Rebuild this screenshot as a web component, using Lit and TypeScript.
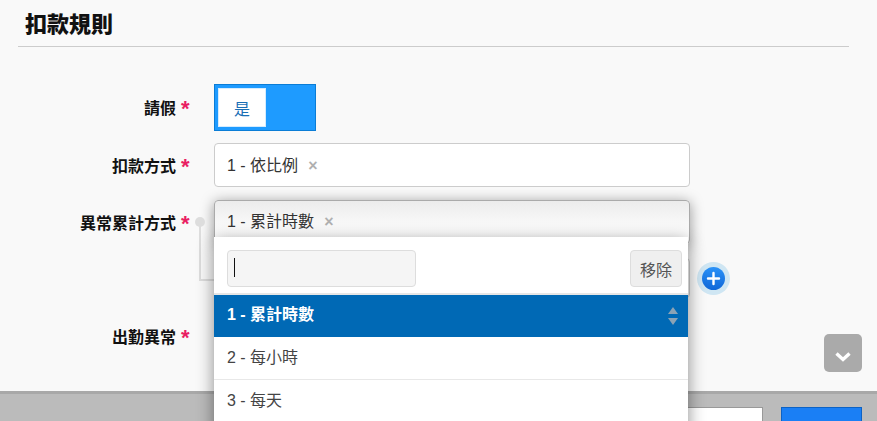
import { LitElement, css, html } from 'lit';
import { customElement, state } from 'lit/decorators.js';

@customElement('app-root')
export class AppRoot extends LitElement {
  static styles = css`
    :host {
      display: flex;
      flex-direction: column;
      position: relative;
      width: 877px;
      height: 421px;
      overflow: hidden;
      background: #f9f9f9;
      color: #333;
      font-family: "Liberation Sans", "Noto Sans CJK TC", sans-serif;
      font-size: 16px;
    }
    main {
      flex: 1;
      min-height: 0;
      padding-left: 18px;
    }
    h2 {
      box-sizing: border-box;
      width: 831px;
      height: 47px;
      margin: 0 0 37px;
      padding: 9px 0 0 7px;
      border-bottom: 1px solid #ccc;
      font-size: 22px;
      line-height: 32px;
      font-weight: 900;
      color: #111;
    }
    .row {
      display: flex;
      column-gap: 24px;
      margin-bottom: 12px;
    }
    .row.second {
      margin-bottom: 13px;
    }
    .row.third {
      margin-bottom: 14px;
    }
    .row.sub {
      margin-bottom: 16px;
      padding-left: 196px;
      column-gap: 7px;
      align-items: center;
    }
    .label {
      box-sizing: border-box;
      width: 172px;
      height: 44px;
      flex: none;
      display: flex;
      justify-content: flex-end;
      align-items: center;
      column-gap: 5px;
      font-weight: 700;
      color: #111;
    }
    .row.first .label {
      height: 46px;
    }
    .label i {
      font-style: normal;
      font-size: 22px;
      line-height: 20px;
      color: #e91e63;
      width: 9px;
      padding-top: 3px;
    }
    .toggle {
      box-sizing: border-box;
      width: 102px;
      height: 47px;
      padding: 3px;
      background: #1e9bff;
      border: 1px solid #0b7dd6;
    }
    .toggle span {
      box-sizing: border-box;
      display: flex;
      align-items: center;
      justify-content: center;
      width: 48px;
      height: 39px;
      background: #fff;
      border: 1px solid #d5ecff;
      font-size: 16px;
      color: #1a6fb5;
    }
    .select {
      box-sizing: border-box;
      width: 476px;
      height: 44px;
      display: flex;
      align-items: center;
      padding: 0 0 3px 12px;
      background: #fff;
      border: 1px solid #ccc;
      border-radius: 4px;
    }
    .select.short {
      height: 40px;
    }
    .select.narrow {
      width: 474px;
    }
    .x {
      margin: 5px 0 0 10px;
      font-size: 16px;
      font-weight: 700;
      color: #b0b0b0;
    }
    .combo {
      position: relative;
      width: 476px;
      height: 44px;
    }
    .combo .select {
      padding-bottom: 5px;
      background: linear-gradient(#ececec, #fff 36px);
      border-color: #aaa;
      box-shadow: 0 2px 14px rgba(0, 0, 0, 0.4);
    }
    .dot {
      position: absolute;
      left: -19px;
      top: 17px;
      width: 10px;
      height: 10px;
      border-radius: 50%;
      background: #ddd;
    }
    .link {
      position: absolute;
      left: -15px;
      top: 22px;
      width: 15px;
      height: 59px;
      box-sizing: border-box;
      border-left: 2px solid #ddd;
      border-bottom: 2px solid #ddd;
    }
    .panel {
      position: absolute;
      z-index: 2;
      left: 0;
      top: 37px;
      width: 474px;
      padding-bottom: 20px;
      background: #fff;
      box-shadow: 0 4px 16px rgba(0, 0, 0, 0.45);
    }
    .search {
      box-sizing: border-box;
      height: 58px;
      display: flex;
      justify-content: space-between;
      padding: 13px 6px 0 13px;
      border-bottom: 2px solid #e6e6e6;
    }
    .input {
      box-sizing: border-box;
      width: 189px;
      height: 37px;
      padding: 7px 0 0 6px;
      background: #f5f5f5;
      border: 1px solid #ddd;
      border-radius: 4px;
    }
    .input b {
      display: block;
      width: 1px;
      height: 19px;
      background: #111;
    }
    .remove {
      box-sizing: border-box;
      width: 52px;
      height: 37px;
      display: flex;
      align-items: center;
      justify-content: center;
      background: #efefef;
      border: 1px solid #ddd;
      border-radius: 4px;
      font-size: 16px;
      color: #555;
    }
    .option {
      box-sizing: border-box;
      height: 43px;
      display: flex;
      align-items: center;
      justify-content: space-between;
      padding: 0 10px 5px 13px;
      border-bottom: 1px solid #e8e8e8;
      color: #444;
    }
    .option.active {
      height: 42px;
      padding-bottom: 6px;
      background: #0069b5;
      border-bottom: none;
      color: #fff;
      font-weight: 700;
    }
    .sort {
      display: flex;
      flex-direction: column;
      row-gap: 4px;
      margin-top: 6px;
    }
    .sort span {
      width: 0;
      height: 0;
      border-left: 5px solid transparent;
      border-right: 5px solid transparent;
    }
    .sort .up {
      border-bottom: 7px solid #8ba3b5;
    }
    .sort .down {
      border-top: 7px solid #8ba3b5;
    }
    .add {
      width: 33px;
      height: 33px;
      display: block;
    }
    .to-bottom {
      box-sizing: border-box;
      position: absolute;
      left: 824px;
      top: 334px;
      width: 38px;
      height: 38px;
      padding-top: 8px;
      display: flex;
      align-items: center;
      justify-content: center;
      border-radius: 5px;
      background: #aaa;
    }
    footer {
      box-sizing: border-box;
      height: 30px;
      flex: none;
      display: flex;
      justify-content: flex-end;
      column-gap: 18px;
      padding: 13px 15px 0 0;
      background: #bbb;
      border-top: 3px solid #a8a8a8;
    }
    footer span {
      box-sizing: border-box;
      width: 82px;
      height: 40px;
      background: #fff;
      border: 1px solid #999;
    }
    footer span.primary {
      width: 81px;
      background: #1a7ff5;
      border-color: #0d62c4;
    }
  `;

  @state()
  options = ['1 - 累計時數', '2 - 每小時', '3 - 每天'];

  render () {
    return html`
      <main>
        <h2>扣款規則</h2>
        <div class="row first">
          <div class="label">請假 <i>*</i></div>
          <div class="toggle"><span>是</span></div>
        </div>
        <div class="row second">
          <div class="label">扣款方式 <i>*</i></div>
          <div class="select">1 - 依比例<span class="x">×</span></div>
        </div>
        <div class="row third">
          <div class="label">異常累計方式 <i>*</i></div>
          <div class="combo">
            <span class="link"></span>
            <span class="dot"></span>
            <div class="select">1 - 累計時數<span class="x">×</span></div>
            <div class="panel">
              <div class="search">
                <div class="input"><b></b></div>
                <div class="remove">移除</div>
              </div>
              ${this.options.map((option, i) => html`
                <div class="option ${i === 0 ? 'active' : ''}">
                  ${option}
                  ${i === 0 ? html`<span class="sort"><span class="up"></span><span class="down"></span></span>` : ''}
                </div>
              `)}
            </div>
          </div>
        </div>
        <div class="row sub">
          <div class="select short"></div>
          <svg class="add" viewBox="0 0 33 33">
            <defs>
              <linearGradient id="plus" x1="0" y1="0" x2="0" y2="1">
                <stop offset="0" stop-color="#2a92f8"></stop>
                <stop offset="1" stop-color="#0f67d8"></stop>
              </linearGradient>
            </defs>
            <circle cx="16.5" cy="16.5" r="16.5" fill="#cfe6f3"></circle>
            <circle cx="16.5" cy="16.5" r="11.5" fill="url(#plus)"></circle>
            <path d="M16.5 11v11M11 16.5h11" stroke="#fff" stroke-width="2.4" stroke-linecap="round"></path>
          </svg>
        </div>
        <div class="row">
          <div class="label">出勤異常 <i>*</i></div>
          <div class="select narrow"></div>
        </div>
      </main>
      <div class="to-bottom">
        <svg width="16" height="10" viewBox="0 0 16 10">
          <path d="M1.5 1.5L8 7.5l6.5-6" fill="none" stroke="#fff" stroke-width="3.4"></path>
        </svg>
      </div>
      <footer>
        <span></span>
        <span class="primary"></span>
      </footer>
    `;
  }
}
